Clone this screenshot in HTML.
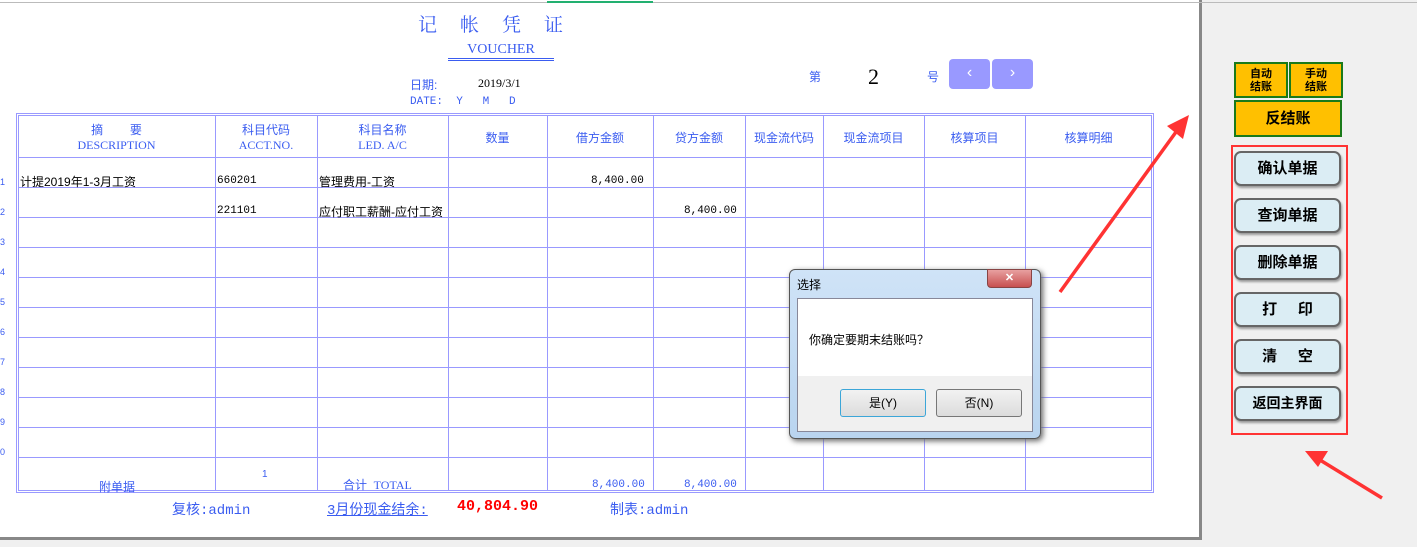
<!DOCTYPE html><html><head><meta charset="utf-8"><style>
*{margin:0;padding:0;box-sizing:border-box}
body{width:1417px;height:547px;position:relative;overflow:hidden;background:#f0f0f0;font-family:"Liberation Sans","Noto Sans CJK SC",sans-serif}
.a{position:absolute}
.bl{color:#3a5cf0}
.hl{position:absolute;height:1px;background:#9999ff}
.vl{position:absolute;width:1px;background:#9999ff}
.t{position:absolute;font-size:12px;white-space:nowrap}
.c{text-align:center}
.serif{font-family:"Liberation Serif","Noto Serif CJK SC",serif}
.mono{font-family:"Liberation Mono","Noto Sans CJK SC",monospace}
.btn{position:absolute;left:1234px;width:107px;height:35px;background:#dbedf4;border:2px solid #666;border-radius:7px;font-weight:bold;font-size:15px;text-align:center;line-height:31px;box-shadow:1px 2px 2px #999}
.y{position:absolute;background:#ffc000;border:2px solid #1a7a1a;font-weight:bold;text-align:center}
</style></head><body>
<div class="a" style="left:0;top:0;width:1199px;height:537px;background:#fff"></div>
<div class="a" style="left:1199px;top:0;width:3px;height:540px;background:#888"></div>
<div class="a" style="left:0;top:537px;width:1202px;height:3px;background:#888"></div>
<div class="a" style="left:0;top:2px;width:1417px;height:1px;background:#bbb"></div>
<div class="a" style="left:547px;top:1px;width:106px;height:2px;background:#22b070"></div>
<div class="t bl serif" style="left:418px;top:10px;font-size:19px;letter-spacing:23px">记帐凭证</div>
<div class="t bl serif" style="left:448px;top:42px;width:106px;text-align:center;border-bottom:3px double #3a5cf0;line-height:16px;font-size:14px">VOUCHER</div>
<div class="t bl" style="left:410px;top:76px">日期:</div>
<div class="t serif" style="left:478px;top:76px">2019/3/1</div>
<div class="t bl mono" style="left:410px;top:96px;font-size:11px">DATE: &nbsp;Y &nbsp;&nbsp;M &nbsp;&nbsp;D</div>
<div class="t bl" style="left:809px;top:68px">第</div>
<div class="t serif" style="left:868px;top:64px;font-size:22px">2</div>
<div class="t bl" style="left:927px;top:68px">号</div>
<div class="a" style="left:949px;top:59px;width:41px;height:30px;background:#9999ff;border-radius:4px;color:#fff;text-align:center;line-height:28px;font-size:16px">‹</div>
<div class="a" style="left:992px;top:59px;width:41px;height:30px;background:#9999ff;border-radius:4px;color:#fff;text-align:center;line-height:28px;font-size:16px">›</div>
<div class="a" style="left:16px;top:113px;width:1138px;height:380px;border:3px double #9999ff"></div>
<div class="hl" style="left:18px;top:157px;width:1134px"></div>
<div class="hl" style="left:18px;top:187px;width:1134px"></div>
<div class="hl" style="left:18px;top:217px;width:1134px"></div>
<div class="hl" style="left:18px;top:247px;width:1134px"></div>
<div class="hl" style="left:18px;top:277px;width:1134px"></div>
<div class="hl" style="left:18px;top:307px;width:1134px"></div>
<div class="hl" style="left:18px;top:337px;width:1134px"></div>
<div class="hl" style="left:18px;top:367px;width:1134px"></div>
<div class="hl" style="left:18px;top:397px;width:1134px"></div>
<div class="hl" style="left:18px;top:427px;width:1134px"></div>
<div class="hl" style="left:18px;top:457px;width:1134px"></div>
<div class="vl" style="left:215px;top:115px;height:376px"></div>
<div class="vl" style="left:317px;top:115px;height:376px"></div>
<div class="vl" style="left:448px;top:115px;height:376px"></div>
<div class="vl" style="left:547px;top:115px;height:376px"></div>
<div class="vl" style="left:653px;top:115px;height:376px"></div>
<div class="vl" style="left:745px;top:115px;height:376px"></div>
<div class="vl" style="left:823px;top:115px;height:376px"></div>
<div class="vl" style="left:924px;top:115px;height:376px"></div>
<div class="vl" style="left:1025px;top:115px;height:376px"></div>
<div class="t bl c" style="left:18px;top:121px;width:197px">摘 &nbsp;&nbsp;&nbsp;&nbsp;&nbsp;&nbsp;&nbsp;要<br><span class="serif">DESCRIPTION</span></div>
<div class="t bl c" style="left:215px;top:121px;width:102px">科目代码<br><span class="serif">ACCT.NO.</span></div>
<div class="t bl c" style="left:317px;top:121px;width:131px">科目名称<br><span class="serif">LED. A/C</span></div>
<div class="t bl c" style="left:448px;top:129px;width:99px">数量</div>
<div class="t bl c" style="left:547px;top:129px;width:106px">借方金额</div>
<div class="t bl c" style="left:653px;top:129px;width:92px">贷方金额</div>
<div class="t bl c" style="left:745px;top:129px;width:78px">现金流代码</div>
<div class="t bl c" style="left:823px;top:129px;width:101px">现金流项目</div>
<div class="t bl c" style="left:924px;top:129px;width:101px">核算项目</div>
<div class="t bl c" style="left:1025px;top:129px;width:127px">核算明细</div>
<div class="t" style="left:20px;top:173px">计提2019年1-3月工资</div>
<div class="t mono" style="left:217px;top:175px;font-size:11px">660201</div>
<div class="t" style="left:319px;top:173px">管理费用-工资</div>
<div class="t mono" style="left:591px;top:175px;font-size:11px">8,400.00</div>
<div class="t mono" style="left:217px;top:205px;font-size:11px">221101</div>
<div class="t" style="left:319px;top:203px">应付职工薪酬-应付工资</div>
<div class="t mono" style="left:684px;top:205px;font-size:11px">8,400.00</div>
<div class="t bl" style="left:99px;top:478px">附单据</div>
<div class="t bl" style="left:262px;top:469px;font-size:10px">1</div>
<div class="t bl" style="left:343px;top:476px">合计 &nbsp;<span class="serif">TOTAL</span></div>
<div class="t bl mono" style="left:592px;top:479px;font-size:11px">8,400.00</div>
<div class="t bl mono" style="left:684px;top:479px;font-size:11px">8,400.00</div>
<div class="t bl" style="left:0px;top:167px;font-size:9px;line-height:30px">1<br>2<br>3<br>4<br>5<br>6<br>7<br>8<br>9<br>0</div>
<div class="t bl mono" style="left:172px;top:499px;font-size:14px">复核:admin</div>
<div class="t bl mono" style="left:327px;top:499px;font-size:14px;text-decoration:underline">3月份现金结余:</div>
<div class="t mono" style="left:457px;top:498px;font-size:15px;color:#f00;font-weight:bold">40,804.90</div>
<div class="t bl mono" style="left:610px;top:499px;font-size:14px">制表:admin</div>
<svg class="a" style="left:0;top:0" width="1417" height="547"><path d="M1060 292 L1176 132" stroke="#f33" stroke-width="3.5"/><path d="M1189 115 L1167 126 L1183 139Z" fill="#f33"/><path d="M1382 498 L1320 460" stroke="#f33" stroke-width="3.5"/><path d="M1305 451 L1328 451 L1318 467Z" fill="#f33"/></svg>
<div class="y" style="left:1234px;top:62px;width:54px;height:36px;font-size:11px;line-height:13px;padding-top:4px">自动<br>结账</div>
<div class="y" style="left:1289px;top:62px;width:54px;height:36px;font-size:11px;line-height:13px;padding-top:4px">手动<br>结账</div>
<div class="y" style="left:1234px;top:100px;width:108px;height:37px;font-size:15px;line-height:33px">反结账</div>
<div class="a" style="left:1231px;top:145px;width:117px;height:290px;border:2px solid #f33"></div>
<div class="btn" style="top:151px">确认单据</div>
<div class="btn" style="top:198px">查询单据</div>
<div class="btn" style="top:245px">删除单据</div>
<div class="btn" style="top:292px">打 &nbsp;&nbsp;&nbsp;&nbsp;印</div>
<div class="btn" style="top:339px">清 &nbsp;&nbsp;&nbsp;&nbsp;空</div>
<div class="btn" style="top:386px;font-size:14px">返回主界面</div>
<div class="a" style="left:789px;top:269px;width:252px;height:170px;border:1px solid #555;border-radius:6px;background:linear-gradient(#cfe3f7,#b9d4ef);box-shadow:2px 2px 6px #666"></div>
<div class="t" style="left:797px;top:276px;font-size:12px">选择</div>
<div class="a" style="left:987px;top:269px;width:45px;height:19px;background:linear-gradient(#e8a0a0,#c75050);border:1px solid #844;border-radius:0 0 4px 4px;color:#fff;text-align:center;font-size:11px;line-height:17px;font-weight:bold">✕</div>
<div class="a" style="left:797px;top:298px;width:236px;height:134px;background:#f0f0f0;border:1px solid #889"></div>
<div class="a" style="left:798px;top:299px;width:234px;height:77px;background:#fff"></div>
<div class="t" style="left:809px;top:331px">你确定要期末结账吗？</div>
<div class="a" style="left:840px;top:389px;width:86px;height:28px;border:1px solid #3ca6d8;border-radius:3px;background:linear-gradient(#f2f2f2,#dcdcdc);font-size:12px;text-align:center;line-height:26px">是(Y)</div>
<div class="a" style="left:936px;top:389px;width:86px;height:28px;border:1px solid #777;border-radius:3px;background:linear-gradient(#f2f2f2,#dcdcdc);font-size:12px;text-align:center;line-height:26px">否(N)</div>
</body></html>
